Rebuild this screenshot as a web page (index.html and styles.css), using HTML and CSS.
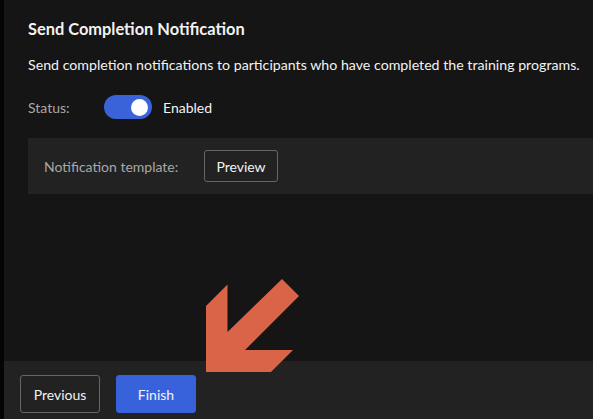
FILE: index.html
```html
<!DOCTYPE html>
<html lang="en">
<head>
<meta charset="utf-8">
<title>Send Completion Notification</title>
<link rel="stylesheet" href="styles.css">
</head>
<body>
<div class="app">
  <div class="strip"></div>
  <div class="main">
    <section class="content">
      <h1 class="title">Send Completion Notification</h1>
      <p class="desc">Send completion notifications to participants who have completed the training programs.</p>
      <div class="status-row">
        <span class="label">Status:</span>
        <span class="toggle"><span class="knob"></span></span>
        <span class="state">Enabled</span>
      </div>
      <div class="panel">
        <span class="panel-label">Notification template:</span>
        <button class="btn btn-outline btn-preview">Preview</button>
      </div>
    </section>
    <footer class="footer">
      <button class="btn btn-outline btn-footer">Previous</button>
      <button class="btn btn-primary btn-footer">Finish</button>
    </footer>
  </div>
  <svg class="arrow" width="593" height="419" viewBox="0 0 593 419" aria-hidden="true">
    <polygon points="206,306 227.5,284.5 227.5,332 282,279 299,296 245,350 293,350 271,372 206,372" fill="#d96448"/>
  </svg>
</div>
</body>
</html>
```

FILE: styles.css
```css
* { box-sizing: border-box; }
html, body { margin: 0; padding: 0; }
body {
  background: #151515;
  font-family: Lato, "Noto Sans", sans-serif;
  color: #f2f2f2;
  font-size: 14px;
  width: 593px;
  height: 419px;
  overflow: hidden;
}
.app {
  position: relative;
  display: flex;
  width: 593px;
  height: 419px;
}
.strip {
  width: 4px;
  background: #050505;
  flex: none;
}
.main {
  flex: 1;
  display: flex;
  flex-direction: column;
}
.content {
  flex: 1;
  padding: 19px 0 0 24px;
}
.title {
  margin: 0;
  font-size: 16.4px;
  line-height: 20px;
  font-weight: 700;
}
.desc {
  margin: 16px 0 0;
  line-height: 20px;
  font-size: 14.2px;
}
.status-row {
  display: flex;
  align-items: center;
  height: 24px;
  margin-top: 20px;
}
.label {
  width: 76px;
  color: #a8a8a8;
}
.toggle {
  width: 48px;
  height: 24px;
  border-radius: 12px;
  background: #3a63d9;
  display: flex;
  align-items: center;
  justify-content: flex-end;
  padding-right: 4px;
}
.knob {
  width: 17px;
  height: 17px;
  border-radius: 50%;
  background: #ffffff;
}
.state { margin-left: 11px; }
.panel {
  margin-top: 19px;
  height: 56px;
  background: #222222;
  display: flex;
  align-items: center;
  padding-left: 16px;
}
.panel-label {
  color: #a8a8a8;
  width: 160px;
}
.btn {
  font-family: inherit;
  font-size: 14px;
  color: #f2f2f2;
  border-radius: 3px;
  cursor: pointer;
}
.btn-outline {
  background: transparent;
  border: 1px solid #666666;
}
.btn-primary {
  background: #3862db;
  border: 1px solid #3862db;
}
.btn-preview {
  width: 74px;
  height: 32px;
}
.footer {
  height: 58px;
  background: #222222;
  display: flex;
  align-items: flex-start;
  gap: 16px;
  padding: 14px 0 0 16px;
}
.btn-footer {
  width: 80px;
  height: 38px;
}
.arrow {
  position: absolute;
  left: 0;
  top: 0;
  pointer-events: none;
}
```
